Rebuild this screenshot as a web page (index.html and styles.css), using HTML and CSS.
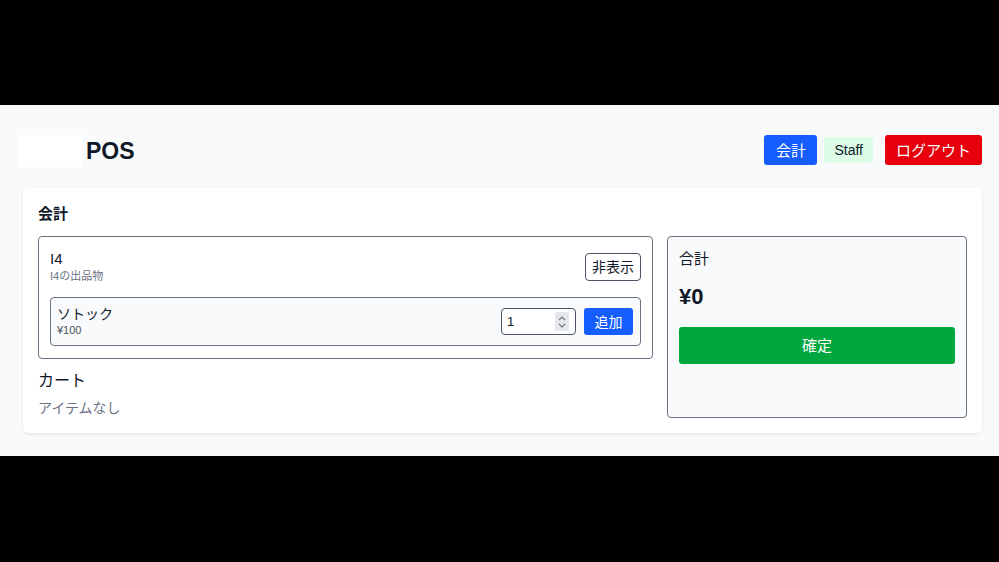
FILE: index.html
```html
<!DOCTYPE html>
<html lang="ja">
<head>
<meta charset="utf-8">
<title>POS</title>
<link rel="stylesheet" href="styles.css">
</head>
<body>
<div class="screen">
  <header class="header">
    <div class="brand">
      <div class="logo"></div>
      <span class="brand-name">POS</span>
    </div>
    <nav class="nav">
      <button class="btn btn-blue nav-btn">会計</button>
      <span class="badge">Staff</span>
      <button class="btn btn-red nav-btn logout">ログアウト</button>
    </nav>
  </header>
  <main class="card">
    <h2 class="card-title">会計</h2>
    <div class="layout">
      <div class="left">
        <section class="panel">
          <div class="panel-head">
            <div>
              <div class="group-name">I4</div>
              <div class="group-sub">I4の出品物</div>
            </div>
            <button class="btn-outline">非表示</button>
          </div>
          <div class="item">
            <div class="item-info">
              <div class="item-name">ソトック</div>
              <div class="item-price">¥100</div>
            </div>
            <div class="item-actions">
              <div class="qty">
                <span class="qty-val">1</span>
                <span class="spin">
                  <svg width="10" height="16" viewBox="0 0 10 16"><path d="M2 6 L5 3 L8 6" fill="none" stroke="#6b7280" stroke-width="1.1"/><path d="M2 10 L5 13 L8 10" fill="none" stroke="#6b7280" stroke-width="1.1"/></svg>
                </span>
              </div>
              <button class="btn btn-blue add">追加</button>
            </div>
          </div>
        </section>
        <h3 class="cart-title">カート</h3>
        <p class="empty">アイテムなし</p>
      </div>
      <aside class="summary">
        <div class="sum-label">合計</div>
        <div class="sum-value">¥0</div>
        <button class="btn btn-green confirm">確定</button>
      </aside>
    </div>
  </main>
</div>
</body>
</html>
```

FILE: styles.css
```css
* { box-sizing: border-box; }
body {
  margin: 0;
  background: #000;
  font-family: "Liberation Sans", "Noto Sans CJK JP", sans-serif;
  color: #101828;
}
.screen {
  margin-top: 105px;
  height: 351px;
  background: #f9fafb;
  padding: 30px 17px 0 18px;
}
.header {
  display: flex;
  align-items: center;
  justify-content: space-between;
  height: 32px;
}
.brand { display: flex; align-items: center; gap: 4px; }
.logo { width: 64px; height: 32px; background: #fff; }
.brand-name { font-size: 23px; font-weight: 700; line-height: 32px; }
.nav { display: flex; align-items: center; gap: 7px; align-self: flex-start; }
.btn {
  border: none;
  font-family: inherit;
  color: #fff;
  border-radius: 3px;
  padding: 0;
  cursor: pointer;
}
.btn-blue { background: #155dfc; }
.btn-red { background: #e7000b; }
.btn-green { background: #00a63e; }
.nav-btn {
  height: 30px;
  font-size: 15px;
  padding: 0 11px 2px;
  font-family: "Noto Sans CJK JP", sans-serif;
}
.nav-btn:first-child { padding: 0 11.5px 2px; }
.logout { margin-left: 5px; }
.badge {
  height: 26px;
  line-height: 26px;
  padding: 0 10px;
  font-size: 14px;
  background: #dcfce7;
  color: #101828;
  border-radius: 3px;
}
.card {
  margin: 21px 0 0 5px;
  background: #fff;
  border-radius: 5px;
  box-shadow: 0 1px 3px rgba(0, 0, 0, 0.1);
  padding: 15px;
}
.card-title { margin: 0 0 11px; font-size: 15px; font-weight: 700; line-height: 22px; }
.layout { display: grid; grid-template-columns: 1fr 300px; gap: 14px; }
.panel {
  border: 1px solid #6a7282;
  border-radius: 4px;
  padding: 13px 11px 12px;
}
.panel-head { display: flex; align-items: center; justify-content: space-between; }
.group-name { font-size: 15px; line-height: 18px; }
.group-sub { font-size: 11px; line-height: 16px; color: #6a7282; }
.btn-outline {
  height: 28px;
  padding: 0 6px 2px;
  background: #fff;
  border: 1px solid #4a5565;
  border-radius: 4px;
  font-family: "Noto Sans CJK JP", sans-serif;
  font-size: 14px;
  color: #101828;
}
.item {
  margin-top: 13px;
  border: 1px solid #6a7282;
  border-radius: 4px;
  background: #f9fafb;
  height: 49px;
  padding: 0 7px 0 6px;
  display: flex;
  align-items: center;
  justify-content: space-between;
}
.item-name { font-size: 14px; line-height: 18px; }
.item-price { font-size: 11px; line-height: 15px; color: #4b5563; }
.item-actions { display: flex; align-items: center; gap: 8px; }
.qty {
  width: 75px;
  height: 27px;
  border: 1px solid #4a5565;
  border-radius: 4px;
  background: #fff;
  display: flex;
  align-items: center;
  justify-content: space-between;
  padding: 0 6px 0 5px;
  font-size: 13px;
}
.spin {
  width: 14px;
  height: 19px;
  background: #e5e7eb;
  border-radius: 2px;
  display: flex;
  align-items: center;
  justify-content: center;
}
.add {
  width: 49px;
  height: 27px;
  font-size: 14px;
  padding-bottom: 2px;
  font-family: "Noto Sans CJK JP", sans-serif;
}
.cart-title { margin: 10px 0 0; font-size: 16px; font-weight: 400; line-height: 24px; }
.empty { margin: 6px 0 0; font-size: 14px; line-height: 19px; color: #6a7282; }
.summary {
  border: 1px solid #6a7282;
  border-radius: 4px;
  background: #f9fafb;
  padding: 12px 11px;
  display: flex;
  flex-direction: column;
}
.sum-label { font-size: 15px; line-height: 20px; }
.sum-value { margin-top: 14px; font-size: 22px; font-weight: 700; line-height: 28px; }
.confirm {
  margin-top: 16px;
  height: 37px;
  width: 100%;
  font-size: 15px;
  padding-bottom: 2px;
  font-family: "Noto Sans CJK JP", sans-serif;
}
```
